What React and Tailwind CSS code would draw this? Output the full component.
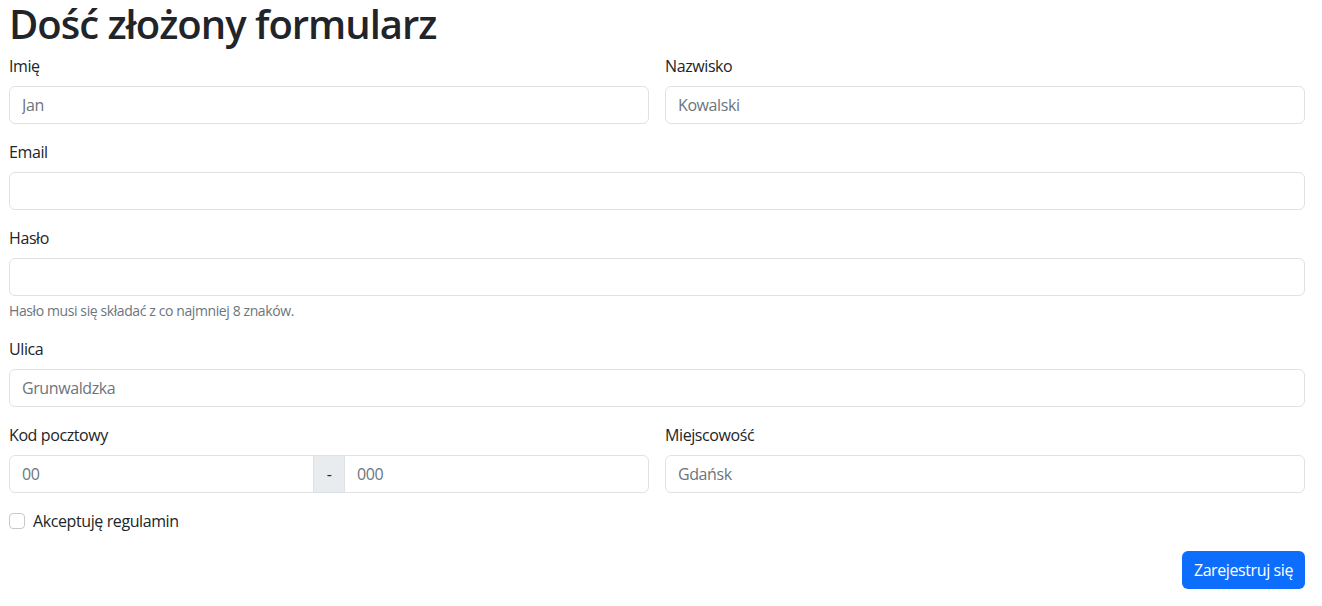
const field =
  'block w-full h-[38px] px-3 py-1.5 text-base text-[#212529] bg-white border border-[#dee2e6] rounded-md placeholder:text-[#6c757d] outline-none';

const Label = ({ children, htmlFor }) => (
  <label htmlFor={htmlFor} className="block mb-2 leading-6">
    {children}
  </label>
);

export default function App() {
  return (
    <div className="min-h-screen bg-white text-[#212529] text-base tracking-[-0.4px] font-['Open_Sans',sans-serif]">
      <form className="pl-[9px] pr-[17px]" onSubmit={(e) => e.preventDefault()}>
        <h1 className="text-[40px] font-semibold leading-[48px] mb-[6px] tracking-[-1px]">
          Dość złożony formularz
        </h1>

        <div className="grid grid-cols-2 gap-x-4">
          <div className="mb-4">
            <Label htmlFor="imie">Imię</Label>
            <input id="imie" className={field} placeholder="Jan" />
          </div>
          <div className="mb-4">
            <Label htmlFor="nazwisko">Nazwisko</Label>
            <input id="nazwisko" className={field} placeholder="Kowalski" />
          </div>
        </div>

        <div className="mb-4">
          <Label htmlFor="email">Email</Label>
          <input id="email" type="email" className={field} />
        </div>

        <div className="mb-4">
          <Label htmlFor="haslo">Hasło</Label>
          <input id="haslo" type="password" className={field} />
          <div className="mt-1 text-sm leading-[21px] text-[#6c757d]">
            Hasło musi się składać z co najmniej 8 znaków.
          </div>
        </div>

        <div className="mb-4">
          <Label htmlFor="ulica">Ulica</Label>
          <input id="ulica" className={field} placeholder="Grunwaldzka" />
        </div>

        <div className="grid grid-cols-2 gap-x-4">
          <div className="mb-4">
            <Label htmlFor="kod1">Kod pocztowy</Label>
            <div className="flex">
              <input
                id="kod1"
                className="flex-1 min-w-0 h-[38px] px-3 text-base bg-white border border-[#dee2e6] rounded-l-md placeholder:text-[#6c757d] outline-none"
                placeholder="00"
              />
              <span className="flex items-center justify-center w-[32px] shrink-0 h-[38px] -ml-px bg-[#e9ecef] border border-[#dee2e6]">
                -
              </span>
              <input
                className="flex-1 min-w-0 h-[38px] px-3 -ml-px text-base bg-white border border-[#dee2e6] rounded-r-md placeholder:text-[#6c757d] outline-none"
                placeholder="000"
              />
            </div>
          </div>
          <div className="mb-4">
            <Label htmlFor="miasto">Miejscowość</Label>
            <input id="miasto" className={field} placeholder="Gdańsk" />
          </div>
        </div>

        <div className="flex items-center gap-2 mb-[18px] leading-6">
          <span className="w-4 h-4 border border-[#c4c9ce] rounded bg-white" />
          <span>Akceptuję regulamin</span>
        </div>

        <div className="flex justify-end">
          <button
            type="submit"
            className="h-[38px] px-3 text-base tracking-[-0.4px] text-white bg-[#0d6efd] rounded-md"
          >
            Zarejestruj się
          </button>
        </div>
      </form>
    </div>
  );
}
